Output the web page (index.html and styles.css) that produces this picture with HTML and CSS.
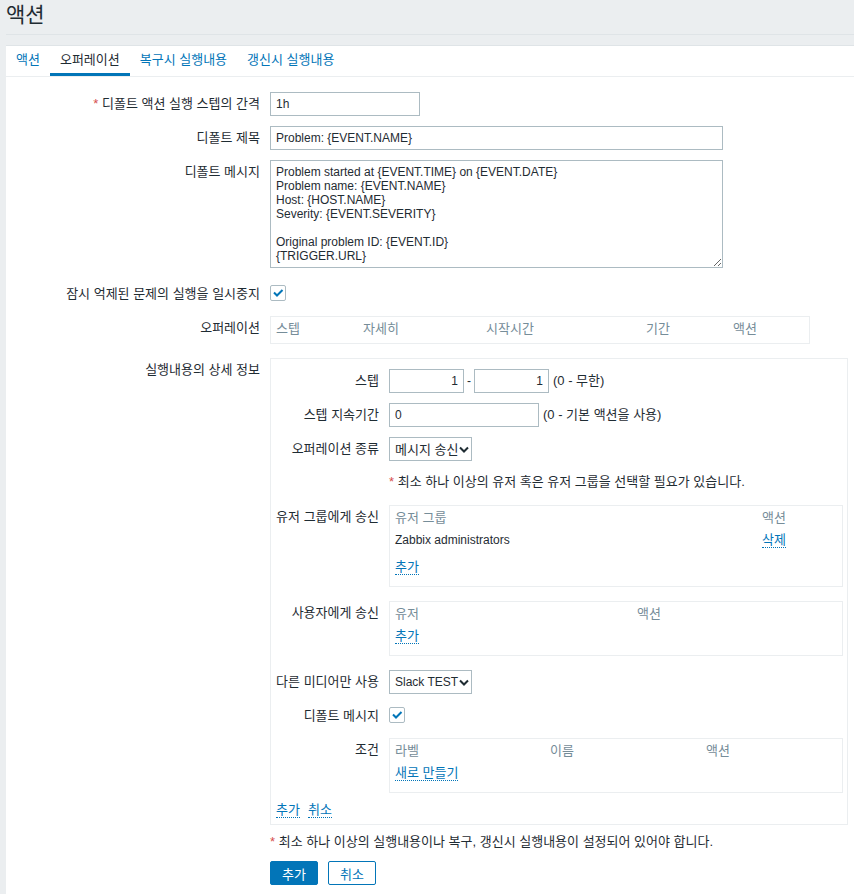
FILE: index.html
```html
<!DOCTYPE html>
<html lang="ko">
<head>
  <meta charset="UTF-8" />
  <meta name="viewport" content="width=device-width, initial-scale=1.0"/>
  <title>액션</title>
  <link rel="stylesheet" href="styles.css">
</head>
<body>
  <header class="page-header">
    <h1>액션</h1>
  </header>

  <main class="wrapper">
    <ul class="tabs">
      <li><a href="#">액션</a></li>
      <li class="active"><a href="#">오퍼레이션</a></li>
      <li><a href="#">복구시 실행내용</a></li>
      <li><a href="#">갱신시 실행내용</a></li>
    </ul>

    <form class="tab-body">
      <ul class="form-list">
        <li>
          <label class="form-label"><span class="req">*</span> 디폴트 액션 실행 스텝의 간격</label>
          <div class="form-field"><input class="text w-150" type="text" value="1h"></div>
        </li>
        <li>
          <label class="form-label">디폴트 제목</label>
          <div class="form-field"><input class="text w-453" type="text" value="Problem: {EVENT.NAME}"></div>
        </li>
        <li class="textarea-row">
          <label class="form-label">디폴트 메시지</label>
          <div class="form-field">
            <textarea class="message">Problem started at {EVENT.TIME} on {EVENT.DATE}
Problem name: {EVENT.NAME}
Host: {HOST.NAME}
Severity: {EVENT.SEVERITY}

Original problem ID: {EVENT.ID}
{TRIGGER.URL}</textarea>
          </div>
        </li>
        <li>
          <label class="form-label">잠시 억제된 문제의 실행을 일시중지</label>
          <div class="form-field">
            <span class="checkbox"><svg width="16" height="16" viewBox="0 0 16 16"><path d="M4 7.5 L7 10.5 L12.5 5" fill="none" stroke="#0275b8" stroke-width="2"/></svg></span>
          </div>
        </li>
        <li class="box-row">
          <label class="form-label">오퍼레이션</label>
          <div class="form-field">
            <div class="table-box ops-box">
              <table>
                <tr>
                  <th style="width: 87px">스텝</th>
                  <th style="width: 123px">자세히</th>
                  <th style="width: 160px">시작시간</th>
                  <th style="width: 87px">기간</th>
                  <th>액션</th>
                </tr>
              </table>
            </div>
          </div>
        </li>
        <li>
          <label class="form-label">실행내용의 상세 정보</label>
          <div class="form-field">
            <div class="op-details">
              <ul class="form-list inner">
                <li>
                  <label class="form-label">스텝</label>
                  <div class="form-field inline">
                    <input class="text num w-75" type="text" value="1">
                    <span class="dash">-</span>
                    <input class="text num w-75" type="text" value="1">
                    <span class="hint">(0 - 무한)</span>
                  </div>
                </li>
                <li>
                  <label class="form-label">스텝 지속기간</label>
                  <div class="form-field inline">
                    <input class="text w-150" type="text" value="0">
                    <span class="hint">(0 - 기본 액션을 사용)</span>
                  </div>
                </li>
                <li>
                  <label class="form-label">오퍼레이션 종류</label>
                  <div class="form-field">
                    <div class="select">
                      <select class="ko"><option>메시지 송신</option></select>
                      <svg class="caret" width="10" height="7" viewBox="0 0 10 7"><path d="M1 1.5 L5 5.5 L9 1.5" fill="none" stroke="#1f2c33" stroke-width="2"/></svg>
                    </div>
                  </div>
                </li>
                <li>
                  <div class="form-label"></div>
                  <div class="form-field note"><span class="req">*</span> 최소 하나 이상의 유저 혹은 유저 그룹을 선택할 필요가 있습니다.</div>
                </li>
                <li class="box-row">
                  <label class="form-label">유저 그룹에게 송신</label>
                  <div class="form-field">
                    <div class="table-box">
                      <table>
                        <tr><th style="width: 367px">유저 그룹</th><th>액션</th></tr>
                        <tr class="data"><td>Zabbix administrators</td><td><a class="link" href="#">삭제</a></td></tr>
                        <tr class="add"><td colspan="2"><a class="link" href="#">추가</a></td></tr>
                      </table>
                    </div>
                  </div>
                </li>
                <li class="box-row">
                  <label class="form-label">사용자에게 송신</label>
                  <div class="form-field">
                    <div class="table-box">
                      <table>
                        <tr><th style="width: 242px">유저</th><th>액션</th></tr>
                        <tr class="add"><td colspan="2"><a class="link" href="#">추가</a></td></tr>
                      </table>
                    </div>
                  </div>
                </li>
                <li>
                  <label class="form-label">다른 미디어만 사용</label>
                  <div class="form-field">
                    <div class="select">
                      <select><option>Slack TEST</option></select>
                      <svg class="caret" width="10" height="7" viewBox="0 0 10 7"><path d="M1 1.5 L5 5.5 L9 1.5" fill="none" stroke="#1f2c33" stroke-width="2"/></svg>
                    </div>
                  </div>
                </li>
                <li>
                  <label class="form-label">디폴트 메시지</label>
                  <div class="form-field">
                    <span class="checkbox"><svg width="16" height="16" viewBox="0 0 16 16"><path d="M4 7.5 L7 10.5 L12.5 5" fill="none" stroke="#0275b8" stroke-width="2"/></svg></span>
                  </div>
                </li>
                <li>
                  <label class="form-label">조건</label>
                  <div class="form-field">
                    <div class="table-box">
                      <table>
                        <tr><th style="width: 155px">라벨</th><th style="width: 156px">이름</th><th>액션</th></tr>
                        <tr class="add"><td colspan="3"><a class="link" href="#">새로 만들기</a></td></tr>
                      </table>
                    </div>
                  </div>
                </li>
              </ul>
              <div class="op-actions">
                <a class="link" href="#">추가</a>
                <a class="link" href="#">취소</a>
              </div>
            </div>
          </div>
        </li>
      </ul>

      <div class="form-foot">
        <p class="note"><span class="req">*</span> 최소 하나 이상의 실행내용이나 복구, 갱신시 실행내용이 설정되어 있어야 합니다.</p>
        <div class="buttons">
          <button type="button" class="btn">추가</button>
          <button type="button" class="btn btn-alt">취소</button>
        </div>
      </div>
    </form>
  </main>
</body>
</html>
```

FILE: styles.css
```css
* {
  box-sizing: border-box;
}
html, body {
  margin: 0;
  padding: 0;
}
body {
  font-family: "Liberation Sans", "Noto Sans CJK KR", sans-serif;
  font-size: 12px;
  line-height: 14px;
  color: #1f2c33;
  background-color: #ebeef0;
  min-height: 100vh;
  display: flex;
  flex-direction: column;
}

/* korean text is set a bit larger so hangul gets the 12px advance of the original */
.tabs a,
.form-label,
.table-box th,
.link,
.note,
.hint,
.btn,
.select select.ko {
  font-size: 13px;
}

/* page title */
.page-header {
  margin-left: 6px;
  padding: 3px 0 7px;
  border-bottom: 1px solid #dfe4e7;
}
.page-header h1 {
  margin: 0;
  font-size: 21px;
  line-height: 24px;
  font-weight: normal;
}

.wrapper {
  flex: 1;
  margin: 10px 0 0 6px;
  background-color: #fff;
  border-top: 1px solid #dfe4e7;
}

/* tabs */
.tabs {
  list-style: none;
  margin: 0;
  padding: 0;
  display: flex;
  border-bottom: 1px solid #ebeef0;
}
.tabs a {
  display: block;
  padding: 7px 10px 6px;
  line-height: 14px;
  border-bottom: 3px solid transparent;
  color: #0275b8;
  text-decoration: none;
}
.tabs .active a {
  color: #1f2c33;
  border-bottom-color: #0275b8;
}

.tab-body {
  padding-top: 15px;
}

/* form rows */
.form-list {
  list-style: none;
  margin: 0;
  padding: 0;
}
.form-list > li {
  display: grid;
  grid-template-columns: 254px 1fr;
  column-gap: 10px;
  min-height: 24px;
}
.form-list > li + li {
  margin-top: 10px;
}
.form-list.inner > li {
  grid-template-columns: 108px 1fr;
}
.form-label {
  text-align: right;
  padding-top: 5px;
}
.form-field.inline {
  display: flex;
  align-items: center;
}
.textarea-row {
  padding-bottom: 4px;
}
.box-row {
  padding-bottom: 4px;
}
.req {
  color: #d64e4e;
}

/* inputs */
.text {
  height: 24px;
  padding: 0 5px;
  border: 1px solid #acbbc2;
  background-color: #fff;
  color: #1f2c33;
  font: inherit;
}
.text.num {
  text-align: right;
}
.w-75 { width: 75px; }
.w-150 { width: 150px; }
.w-453 { width: 453px; }

.message {
  display: block;
  width: 453px;
  height: 108px;
  padding: 4px 5px;
  border: 1px solid #acbbc2;
  font: inherit;
  color: #1f2c33;
}

.dash {
  margin: 0 3px;
}
.hint {
  margin-left: 4px;
}

.checkbox {
  display: block;
  width: 16px;
  height: 16px;
  margin-top: 3px;
  border: 1px solid #acbbc2;
  border-radius: 2px;
  position: relative;
}
.checkbox svg {
  position: absolute;
  top: -1px;
  left: -1px;
}

.select {
  position: relative;
  display: inline-block;
}
.select select {
  appearance: none;
  -webkit-appearance: none;
  width: 83px;
  height: 24px;
  padding: 0 4px 0 5px;
  border: 1px solid #acbbc2;
  border-radius: 0;
  background-color: #fff;
  color: #1f2c33;
  font-family: inherit;
  font-size: 12px;
}
.select .caret {
  position: absolute;
  right: 3px;
  top: 9px;
  pointer-events: none;
}

.note {
  padding: 4px 0 6px;
  margin: 0;
}

/* bordered tables */
.table-box {
  border: 1px solid #ebeef0;
  padding: 0 5px 9px;
}
.ops-box {
  width: 540px;
  padding-bottom: 4px;
}
.table-box table {
  width: 100%;
  border-collapse: collapse;
}
.table-box th {
  color: #768d99;
  font-weight: normal;
  text-align: left;
  padding: 5px 0 3px;
  line-height: 14px;
}
.table-box td {
  padding: 5px 0 3px;
  line-height: 14px;
}
.table-box tr.data td {
  padding-bottom: 8px;
}

.link {
  color: #0275b8;
  text-decoration: none;
  border-bottom: 1px dotted #0275b8;
}

.op-details {
  width: 578px;
  border: 1px solid #ebeef0;
  padding: 10px 4px 6px 0;
}
.op-actions {
  display: flex;
  gap: 8px;
  padding-left: 5px;
  margin-top: 10px;
  line-height: 14px;
}

/* footer of form */
.form-foot {
  margin-left: 264px;
  padding-top: 10px;
  padding-bottom: 8px;
}
.form-foot .note {
  padding: 0;
  line-height: 14px;
}
.buttons {
  margin-top: 12px;
  display: flex;
  gap: 10px;
}
.btn {
  height: 24px;
  padding: 0 11px;
  border: 1px solid #0275b8;
  border-radius: 2px;
  background-color: #0275b8;
  color: #fff;
  font-family: inherit;
}
.btn-alt {
  background-color: #fff;
  color: #0275b8;
}
```
